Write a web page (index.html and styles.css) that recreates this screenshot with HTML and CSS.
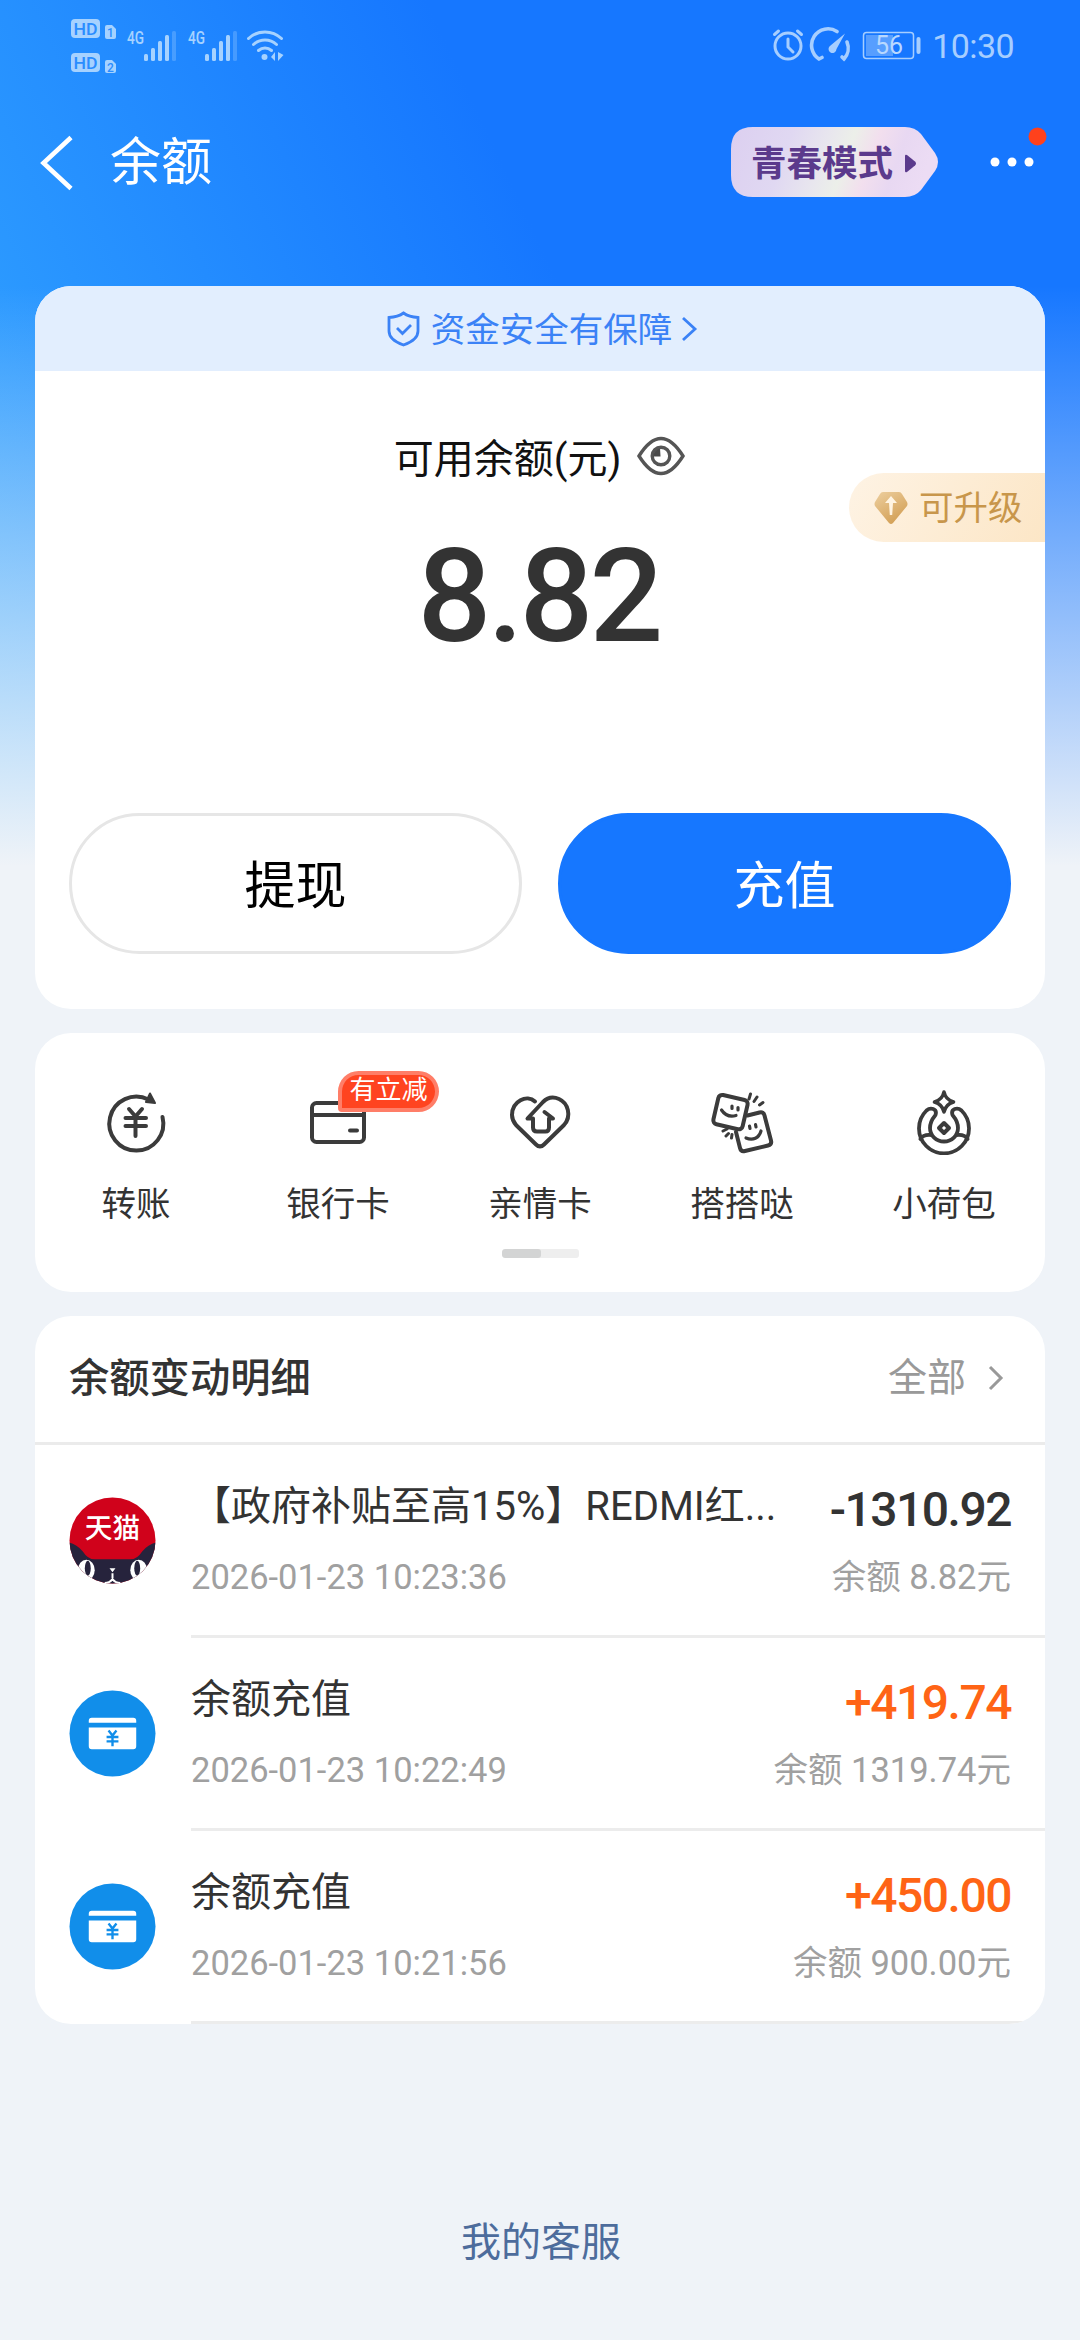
FILE: index.html
```html
<!DOCTYPE html>
<html lang="zh-CN">
<head>
<meta charset="utf-8">
<title>余额</title>
<link rel="stylesheet" href="styles.css">
</head>
<body>
<div class="page">
  <header class="status">
    <svg class="status-left" width="230" height="70" viewBox="60 10 230 70">
      <g fill="#a6d2ff">
        <rect x="71" y="19" width="29" height="19" rx="4"/>
        <rect x="71" y="53" width="29" height="19" rx="4"/>
        <path d="M105 27q0-2 2-2h5l4 4v8q0 2-2 2h-7q-2 0-2-2z"/>
        <path d="M105 62q0-2 2-2h5l4 4v7q0 2-2 2h-7q-2 0-2-2z"/>
        <rect x="144" y="54" width="4" height="7" rx="1.5"/><rect x="151" y="48" width="4" height="13" rx="1.5"/>
        <rect x="158" y="41" width="4" height="20" rx="1.5"/><rect x="165" y="35" width="4" height="26" rx="1.5"/>
        <rect x="172" y="31" width="4" height="30" rx="1.5" opacity=".3"/>
        <rect x="205" y="54" width="4" height="7" rx="1.5"/><rect x="212" y="48" width="4" height="13" rx="1.5"/>
        <rect x="219" y="41" width="4" height="20" rx="1.5"/><rect x="226" y="35" width="4" height="26" rx="1.5"/>
        <rect x="233" y="31" width="4" height="30" rx="1.5" opacity=".3"/>
        <circle cx="264.500" cy="57" r="3"/>
        <path d="M275 52v9l-4-4zM278 52v9l5.500-6z"/>
      </g>
      <g fill="none" stroke="#a6d2ff" stroke-width="3" stroke-linecap="round">
        <path d="M248.500 38.500a24 24 0 0 1 33 0M253.500 44.500a17 17 0 0 1 23 0M258.500 50.500a10 10 0 0 1 13 0"/>
      </g>
      <g class="status-tag">
        <text x="73.500" y="34.500" font-size="17" textLength="24" lengthAdjust="spacingAndGlyphs" class="cut">HD</text>
        <text x="73.500" y="68.500" font-size="17" textLength="24" lengthAdjust="spacingAndGlyphs" class="cut">HD</text>
        <text x="107" y="37" font-size="12" class="cut">1</text>
        <text x="107" y="71.500" font-size="12" class="cut">2</text>
        <text x="127" y="43.500" font-size="19" textLength="17" lengthAdjust="spacingAndGlyphs" class="net">4G</text>
        <text x="188" y="43.500" font-size="19" textLength="17" lengthAdjust="spacingAndGlyphs" class="net">4G</text>
      </g>
    </svg>
    <div class="status-right">
      <svg width="150" height="40" viewBox="770 26 150 40" fill="none" stroke="#a6ceff" stroke-width="3" stroke-linecap="round">
        <circle cx="787" cy="46" r="13"/><path d="M787 39v8l5 5M773.500 34.500l4-3.500M800.500 34.500l-4-3.500"/>
        <path d="M836 31.500A16 16 0 0 0 818 59l3-1.500" stroke-width="3.600"/><path d="M846 42a16 16 0 0 1-3 17l-2-2" stroke-width="3.600"/>
        <path d="M844 33.500l-8.500 15.500a4 4 0 1 1-6-3.500z" fill="#a6ceff" stroke="none"/>
        <rect x="862.500" y="32.500" width="50" height="26" rx="3" stroke-width="1.500"/>
        <rect x="865" y="35" width="27" height="21" fill="#a6ceff" fill-opacity=".45" stroke="none"/>
        <path d="M917.500 39v13" stroke-width="4"/>
        <text x="888" y="54" font-size="25" text-anchor="middle" fill="#b8d8ff" stroke="none">56</text>
      </svg>
      <span class="clock">10:30</span>
    </div>
  </header>

  <nav class="nav">
    <svg class="back" width="34" height="56" viewBox="0 0 34 56" fill="none" stroke="#fff" stroke-width="4.600"><path d="M31 2.500L3.500 28 31 53.500"/></svg>
    <h1 class="nav-title">余额</h1>
    <a class="mode">
      <svg class="mode-bg" width="208" height="70" viewBox="0 0 208 70">
        <defs>
          <linearGradient id="holo" x1="0" y1="0" x2="1" y2=".12">
            <stop offset="0" stop-color="#dccff0"/><stop offset=".3" stop-color="#e0d8f2"/><stop offset=".48" stop-color="#e8e6ee"/>
            <stop offset=".6" stop-color="#ecefe9"/><stop offset=".72" stop-color="#f2dfee"/><stop offset=".85" stop-color="#e8d8f2"/><stop offset="1" stop-color="#ecdcf4"/>
          </linearGradient>
        </defs>
        <path d="M22 0H174q10 0 16 7l14 19q6 9 0 18l-14 19q-6 7-16 7H22Q0 70 0 48V22Q0 0 22 0z" fill="url(#holo)"/>
        <path d="M174 29v15q0 2 2 1l8-6.500q2-2 0-4l-8-6.500q-2-1-2 1z" fill="#5b3a8c"/>
      </svg>
      <span class="mode-text">青春模式</span>
    </a>
    <svg class="more" width="62" height="60" viewBox="986 124 62 60">
      <g fill="#fff"><circle cx="994" cy="162" r="4.500"/><circle cx="1011" cy="162" r="4.500"/><circle cx="1028" cy="162" r="4.500"/></g>
      <circle cx="1036.500" cy="136.500" r="9" fill="#ff411c"/>
    </svg>
  </nav>

  <main class="cards">
    <section class="card balance">
      <a class="safe">
        <svg width="33" height="36" viewBox="0 0 33 36" fill="none" stroke="#3b82f6" stroke-width="2.800"><path d="M16.500 2Q22 6 31 6.500V20q0 9-14.500 14Q2 29 2 20V6.500Q11 6 16.500 2z"/><path d="M10 17l5.500 5.500L24 14"/></svg>
        <span class="safe-text">资金安全有保障</span>
        <svg class="safe-arrow" width="17" height="26" viewBox="0 0 17 26" fill="none" stroke="#3b82f6" stroke-width="2.800"><path d="M2 2l12 11L2 24"/></svg>
      </a>
      <div class="label">
        <span>可用余额(元)</span>
        <svg width="50" height="42" viewBox="0 0 50 42" fill="none" stroke="#555" stroke-width="3.400"><path d="M3 21Q14 3.500 25 3.500T47 21Q36 38.500 25 38.500T3 21z"/><circle cx="25" cy="21" r="8.800"/><path d="M24 13.500a7.500 7.500 0 0 0-6.500 8h7z" fill="#4a4a4a" stroke="none"/></svg>
      </div>
      <div class="total">8.82</div>
      <div class="actions">
        <button class="btn">提现</button>
        <button class="btn primary">充值</button>
      </div>
      <a class="upgrade">
        <svg width="34" height="34" viewBox="0 0 34 34">
          <defs><linearGradient id="gem" x1="0" y1="0" x2=".6" y2="1"><stop offset="0" stop-color="#edcf9f"/><stop offset="1" stop-color="#d3a056"/></linearGradient></defs>
          <path d="M9 1h16q2 0 3 2l5 8q1 2 0 4L19 32q-2 2-4 0L1 15q-1-2 0-4l5-8q1-2 3-2z" fill="url(#gem)"/>
          <path d="M17 5l6 7h-4l-.8 12h-2.400L15 12h-4z" fill="#fff4e2"/>
        </svg>
        <span class="upgrade-text">可升级</span>
      </a>
    </section>

    <section class="card tools">
      <div class="tool-row">
        <a class="tool">
          <svg class="icon" viewBox="0 0 66 66"><path d="M45.500 10.500A27 27 0 1 0 59.500 28"/><path d="M47 4.500l5 9.500-9-1z" fill="#3b3b3b" stroke-width="2"/><path d="M26 20l6.500 7.500L39 20M22.500 29h20.500M22.500 37h20.500M32.500 28v19" stroke-width="4"/></svg>
          <span>转账</span>
        </a>
        <a class="tool">
          <svg class="icon" viewBox="0 0 66 66"><rect x="7" y="14" width="52" height="39" rx="4.500"/><path d="M7 26h52M45 41.500h7"/></svg>
          <span>银行卡</span>
          <em class="promo">有立减</em>
        </a>
        <a class="tool">
          <svg class="icon" viewBox="0 0 66 66"><path d="M28 12.500C20 5 5 12 5 26c0 4 1.500 7 4 10l20 19.500q4 4 8 0L57 36c8-9 4-22-5-26-7-3-12-1-16 3L20.500 29.500h5.500v9q0 4 4 4h8.500q3.500 0 3.500-4v-9h4L37.500 23"/></svg>
          <span>亲情卡</span>
        </a>
        <a class="tool">
          <svg class="icon" viewBox="0 0 66 66"><rect x="6.500" y="8" width="30" height="30" rx="4" transform="rotate(13 21 23)"/><path d="M38.500 26.500l12-3q4-1 5 3l6.500 25q1 4-3 5L36 62q-4 1-5-3l-4-16"/><path d="M23 17v2.500M29 18.500v2.500M12.500 21c4 6 9 7 14.500 5.500M40.500 37l.5 2.500M46.500 35.500l.5 2.500M37 49c7 3 13 0 15-7" stroke-width="3.200"/><path d="M40 10l1.500-5M45 12.500l3-4.500M50.500 16l3.500-2.500M14 42l4-2M17 47l2.500-2.500M22.500 49l.5-3.500" stroke-width="3"/></svg>
          <span>搭搭哒</span>
        </a>
        <a class="tool">
          <svg class="icon" viewBox="0 0 66 66"><path d="M33 3q1.500 7.500 9.500 10Q34.500 15.500 33 23q-1.500-7.500-9.500-10Q31.500 10.500 33 3z" stroke-width="3.600"/><path d="M24.500 26C26.500 19.500 19.500 18 15.500 21.500A25 25 0 1 0 50.500 21.500C46.500 18 39.500 19.500 41.500 26C44 29 47 32 47 39A14 13.500 0 0 1 19 39C19 32 22 29 24.500 26zM9.500 50Q12.500 45 20.500 46M56.500 50Q53.500 45 45.500 46" stroke-width="3.800"/><path d="M33 34l5 5-5 5-5-5z"/></svg>
          <span>小荷包</span>
        </a>
      </div>
      <div class="pager"><i class="pager-on"></i></div>
    </section>

    <section class="card history">
      <div class="history-head">
        <h2>余额变动明细</h2>
        <a class="all"><span>全部</span><svg class="all-arrow" width="16" height="26" viewBox="0 0 16 26" fill="none" stroke="#999" stroke-width="3"><path d="M2 2l11 11L2 24"/></svg></a>
      </div>
      <div class="entry">
        <svg class="avatar" viewBox="0 0 88 88">
          <defs><clipPath id="disc"><circle cx="44" cy="44" r="43.500"/></clipPath></defs>
          <g clip-path="url(#disc)">
            <rect width="88" height="88" fill="#d0021b"/>
            <path d="M0 46q8 2 14 9 5 8 12 8h36q7 0 12-8 6-7 14-9v42H0z" fill="#26233c"/>
            <ellipse cx="17.500" cy="74" rx="8.500" ry="10.500" fill="#fff"/><ellipse cx="70.500" cy="74" rx="8.500" ry="10.500" fill="#fff"/>
            <ellipse cx="19" cy="72" rx="3" ry="7.500" fill="#26233c"/><ellipse cx="69" cy="72" rx="3" ry="7.500" fill="#26233c"/>
            <path d="M41 72h6l-3 4zM43 77h2v5h-2z" fill="#fff"/><path d="M36 87q5 0 8-4 3 4 8 4" fill="none" stroke="#fff" stroke-width="2"/>
          </g>
          <text x="44" y="41.500" text-anchor="middle" class="tmall">天猫</text>
        </svg>
        <div class="entry-body">
          <div class="entry-text"><div class="name">【政府补贴至高15%】REDMI红...</div><div class="meta">2026-01-23 10:23:36</div></div>
          <div class="entry-sum"><div class="amount">-1310.92</div><div class="meta">余额 8.82元</div></div>
        </div>
      </div>
      <div class="entry">
        <svg class="avatar" viewBox="0 0 88 88"><circle cx="44" cy="44" r="43.500" fill="#118eea"/><path d="M20 33v-2q0-3 3-3h42q3 0 3 3v2zM20 38h48v19q0 3-3 3H23q-3 0-3-3z" fill="#fff"/><path d="M40 41l4 5 4-5M38 47.500h12M38 52h12M44 46v11" fill="none" stroke="#118eea" stroke-width="2.400"/></svg>
        <div class="entry-body">
          <div class="entry-text"><div class="name">余额充值</div><div class="meta">2026-01-23 10:22:49</div></div>
          <div class="entry-sum"><div class="amount income">+419.74</div><div class="meta">余额 1319.74元</div></div>
        </div>
      </div>
      <div class="entry">
        <svg class="avatar" viewBox="0 0 88 88"><circle cx="44" cy="44" r="43.500" fill="#118eea"/><path d="M20 33v-2q0-3 3-3h42q3 0 3 3v2zM20 38h48v19q0 3-3 3H23q-3 0-3-3z" fill="#fff"/><path d="M40 41l4 5 4-5M38 47.500h12M38 52h12M44 46v11" fill="none" stroke="#118eea" stroke-width="2.400"/></svg>
        <div class="entry-body">
          <div class="entry-text"><div class="name">余额充值</div><div class="meta">2026-01-23 10:21:56</div></div>
          <div class="entry-sum"><div class="amount income">+450.00</div><div class="meta">余额 900.00元</div></div>
        </div>
      </div>
    </section>
  </main>
  <footer class="service">我的客服</footer>
</div>
</body>
</html>
```
FILE: styles.css
```css
* { box-sizing: border-box; }
body {
  margin: 0;
  font-family: Roboto, "Noto Sans CJK SC", sans-serif;
  color: #333;
}
svg { display: block; flex: none; }
h1, h2 { margin: 0; font-weight: 400; }
.page {
  width: 1080px;
  height: 2340px;
  overflow: hidden;
  background:
    linear-gradient(180deg, rgba(239, 243, 248, 0) 286px, #eff3f8 866px) 0 0 / 100% 868px no-repeat,
    linear-gradient(65deg, #35a9ff 0%, #1677ff 56%) 0 0 / 100% 866px no-repeat,
    #eff3f8;
}

.status {
  height: 92px;
  padding: 10px 66px 0 60px;
  display: flex;
  justify-content: space-between;
}
.status-tag { font-weight: 500; }
.cut { fill: #2a8dff; }
.net { fill: #a6d2ff; }
.status-right { display: flex; gap: 11px; padding-top: 16px; }
.clock { color: #a6ceff; font-size: 34px; line-height: 40px; letter-spacing: -.6px; }

.nav { height: 194px; display: flex; align-items: flex-start; padding-left: 40px; }
.back { margin-top: 43px; }
.nav-title { margin-left: 36px; margin-top: 33px; font-size: 51px; line-height: 76px; color: #fff; width: 104px; }
.mode { position: relative; margin-left: 517px; margin-top: 35px; width: 208px; height: 70px; }
.mode-bg { position: absolute; left: 0; top: 0; }
.mode-text { position: relative; display: block; padding: 2px 0 0 20px; font-size: 35.500px; font-weight: 700; line-height: 70px; color: #5b3a8c; }
.more { margin-left: 48px; margin-top: 32px; }

.cards { padding: 0 35px; display: flex; flex-direction: column; gap: 24px; }
.card { background: #fff; border-radius: 36px; overflow: hidden; position: relative; }

.balance { height: 723px; }
.safe { height: 85px; padding-left: 5px; background: #e2eefe; color: #3b82f6; font-size: 34.500px; display: flex; align-items: center; justify-content: center; gap: 11px; }
.safe-text { padding-bottom: 4px; }
.safe-arrow { margin-left: -2px; }
.label { margin-top: 55px; height: 60px; display: flex; align-items: center; justify-content: center; gap: 15px; font-size: 40px; color: #111; }
.total { margin-top: 36px; height: 150px; line-height: 150px; text-align: center; font-size: 130px; font-weight: 500; letter-spacing: -4px; text-indent: -3px; }
.actions { margin-top: 141px; padding: 0 34px; display: flex; gap: 36px; }
.btn { flex: 1; height: 141px; border: 3px solid #e6e6e6; border-radius: 71px; background: #fff; font: 400 51px Roboto, "Noto Sans CJK SC", sans-serif; color: #000; padding: 0 0 3px; }
.btn.primary { background: #1677ff; border-color: #1677ff; color: #fff; }
.upgrade {
  position: absolute;
  right: 0;
  top: 187px;
  width: 196px;
  height: 69px;
  padding-left: 25px;
  border-radius: 35px 0 0 35px;
  background: linear-gradient(120deg, #fef3e4, #fce6c6);
  display: flex;
  align-items: center;
  gap: 11px;
  font-size: 34.500px;
  color: #c8964b;
}
.upgrade-text { padding-bottom: 6px; }

.tools { height: 259px; padding-top: 56px; }
.tool-row { display: grid; grid-template-columns: repeat(5, 1fr); }
.tool { position: relative; display: flex; flex-direction: column; align-items: center; gap: 24px; font-size: 34.500px; line-height: 50px; }
.icon { width: 66px; height: 66px; fill: none; stroke: #3b3b3b; stroke-width: 4; stroke-linecap: round; stroke-linejoin: round; }
.promo {
  position: absolute;
  left: 101px;
  top: -18px;
  width: 101px;
  height: 41px;
  border: 4px solid #ff7e68;
  border-radius: 21px 21px 21px 4px;
  background: #ff4420;
  color: #fff;
  font-size: 26px;
  font-style: normal;
  line-height: 31px;
  text-align: center;
}
.pager { width: 77px; height: 9px; margin: 20px auto 0; border-radius: 3px; background: #eee; overflow: hidden; }
.pager-on { display: block; width: 39px; height: 9px; border-radius: 3px; background: #d3d4d4; }

.history-head { height: 129px; padding: 0 41px 10px 34px; border-bottom: 3px solid #ebebeb; display: flex; align-items: center; justify-content: space-between; }
.history-head h2 { font-size: 40.300px; font-weight: 500; }
.all { display: flex; align-items: center; gap: 22px; font-size: 39px; color: #999; }
.all-arrow { margin-top: 7px; }
.entry { height: 193px; padding-left: 34px; display: flex; align-items: center; }
.avatar { width: 87px; height: 87px; margin-bottom: 2px; }
.tmall { fill: #fff; font-size: 28px; font-weight: 500; }
.entry-body { flex: 1; height: 193px; margin-left: 35px; padding: 27px 34px 0 0; border-bottom: 3px solid #ececec; display: flex; justify-content: space-between; white-space: nowrap; }
.name { font-size: 40px; line-height: 70px; }
.meta { font-size: 34.500px; line-height: 50px; margin-top: 10px; color: #a0a0a0; }
.entry-sum { text-align: right; }
.amount { position: relative; top: 3px; font-size: 48px; line-height: 70px; font-weight: 500; letter-spacing: -1.500px; }
.income { color: #ff6415; }

.service { margin-top: 184px; padding-left: 2px; text-align: center; font-size: 40px; line-height: 70px; color: #4d6c9c; }
```
